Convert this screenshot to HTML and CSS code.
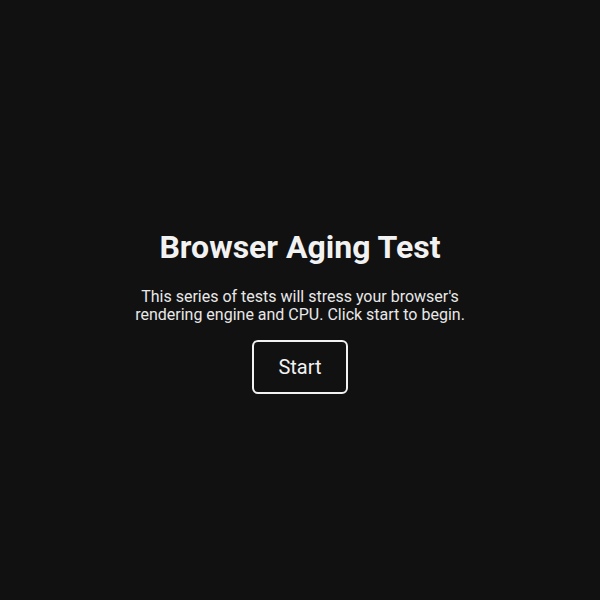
FILE: index.html
```html
<!DOCTYPE html>
<html>
<head>
<meta charset="utf-8">
<link rel="stylesheet" href="styles.css">
</head>
<body>
<main class="screen">
  <h1 class="title">Browser Aging Test</h1>
  <p class="intro">This series of tests will stress your browser's<br>rendering engine and CPU. Click start to begin.</p>
  <button class="start">Start</button>
</main>
</body>
</html>
```
FILE: styles.css
```css
html, body {
  margin: 0;
  padding: 0;
  background: #111111;
}
.screen {
  box-sizing: border-box;
  height: 600px;
  padding-top: 21px;
  display: flex;
  flex-direction: column;
  align-items: center;
  justify-content: center;
  font-family: Roboto, "Liberation Sans", sans-serif;
  color: #f2f2f2;
  text-align: center;
}
.title {
  margin: 0;
  font-size: 32px;
  font-weight: 700;
  line-height: 38px;
}
.intro {
  margin: 22px 0 16px;
  font-size: 16px;
  line-height: 18px;
  color: #e8e8e8;
}
.start {
  font-family: Roboto, "Liberation Sans", sans-serif;
  font-size: 20px;
  line-height: 24px;
  color: #f2f2f2;
  background: transparent;
  border: 2px solid #f2f2f2;
  border-radius: 6px;
  padding: 13px 24px;
}
```
